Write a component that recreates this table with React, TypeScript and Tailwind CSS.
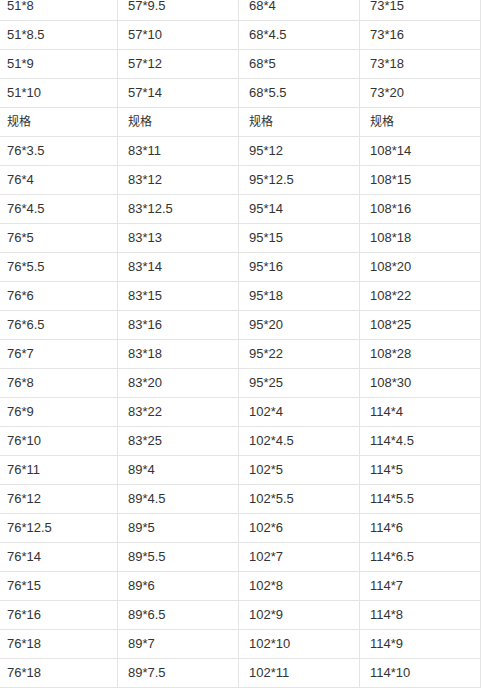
import React from "react";

const cols: string[][] = [
  ["51*8","51*8.5","51*9","51*10","规格","76*3.5","76*4","76*4.5","76*5","76*5.5","76*6","76*6.5","76*7","76*8","76*9","76*10","76*11","76*12","76*12.5","76*14","76*15","76*16","76*18","76*18"],
  ["57*9.5","57*10","57*12","57*14","规格","83*11","83*12","83*12.5","83*13","83*14","83*15","83*16","83*18","83*20","83*22","83*25","89*4","89*4.5","89*5","89*5.5","89*6","89*6.5","89*7","89*7.5"],
  ["68*4","68*4.5","68*5","68*5.5","规格","95*12","95*12.5","95*14","95*15","95*16","95*18","95*20","95*22","95*25","102*4","102*4.5","102*5","102*5.5","102*6","102*7","102*8","102*9","102*10","102*11"],
  ["73*15","73*16","73*18","73*20","规格","108*14","108*15","108*16","108*18","108*20","108*22","108*25","108*28","108*30","114*4","114*4.5","114*5","114*5.5","114*6","114*6.5","114*7","114*8","114*9","114*10"],
];

export default function App() {
  const rows = cols[0].map((_, r) => cols.map((c) => c[r]));
  return (
    <div className="w-[481px] h-[688px] overflow-hidden bg-white">
      <div
        className="-ml-[4px] -mt-[9px] w-[485px] border-l border-t border-[#e4e4e4] grid grid-cols-[121px_121px_121px_121px] text-[#333333] text-[13px]"
        style={{ fontFamily: '"Liberation Sans", Arial, "Noto Sans CJK SC", sans-serif' }}
      >
        {rows.map((row, r) =>
          row.map((cell, c) => (
            <div
              key={`${r}-${c}`}
              className="h-[29px] border-r border-b border-[#e4e4e4] pl-[10px] flex items-center whitespace-nowrap"
            >
              <span className={cell === "规格" ? "text-[12px]" : ""}>{cell}</span>
            </div>
          ))
        )}
      </div>
    </div>
  );
}
